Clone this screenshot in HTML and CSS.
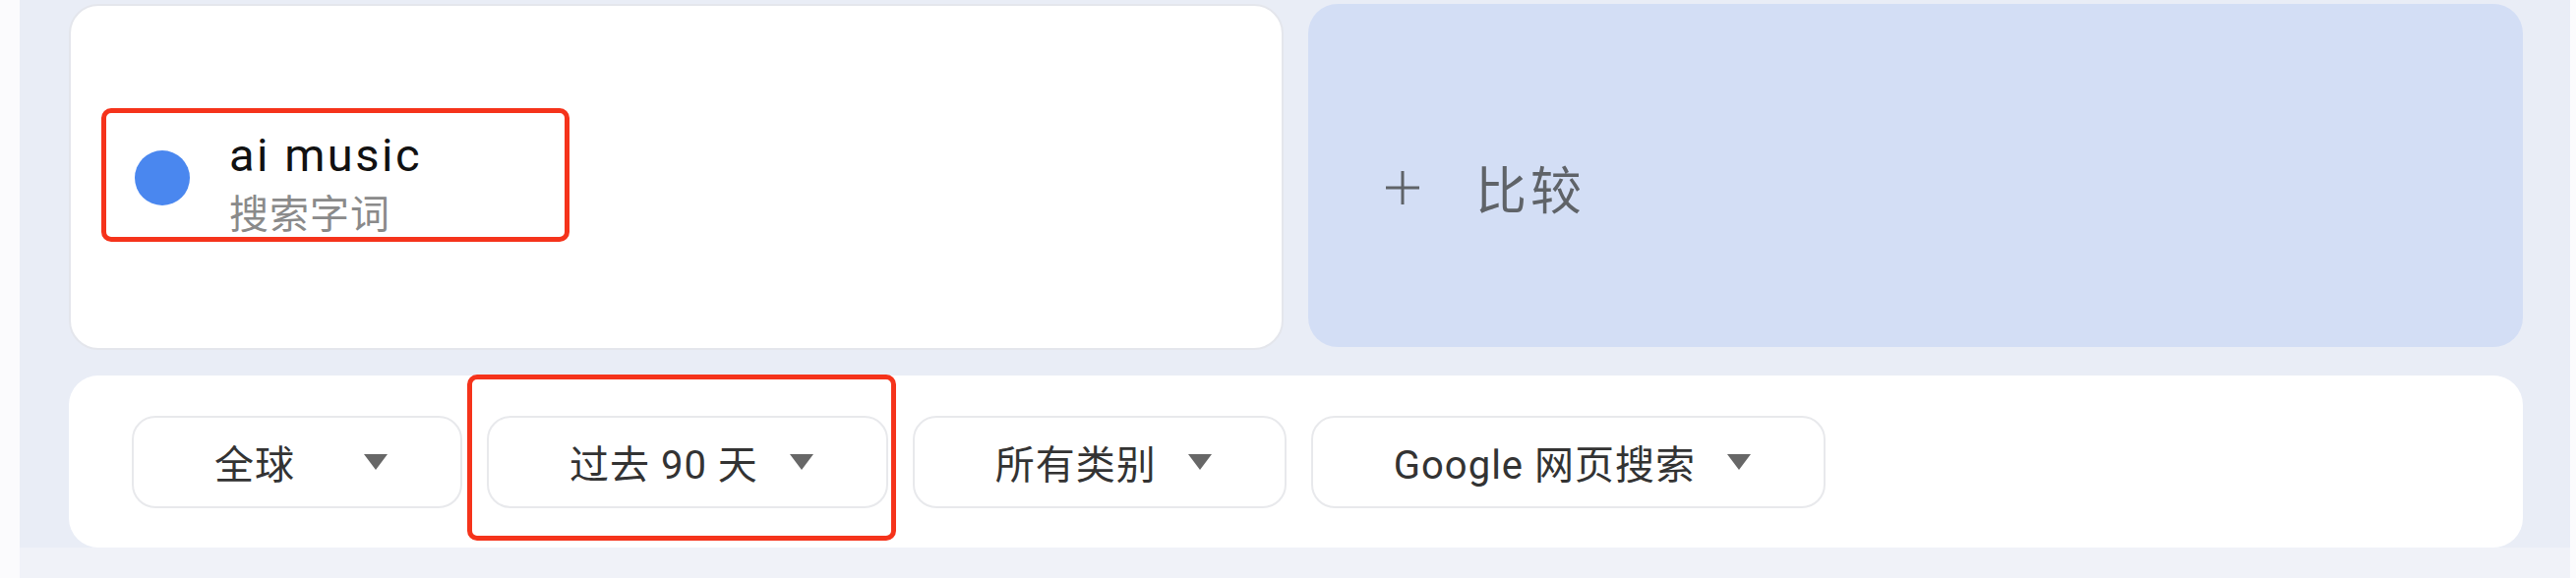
FILE: index.html
```html
<!DOCTYPE html>
<html lang="zh-CN">
<head>
<meta charset="utf-8">
<title>Google Trends</title>
<link rel="stylesheet" href="styles.css">
</head>
<body>
<div class="page">
  <div class="panel">
    <div class="row">
      <div class="card term-card">
        <div class="term">
          <span class="dot"></span>
          <div class="term-text">
            <div class="term-name">ai music</div>
            <div class="term-type">搜索字词</div>
          </div>
          <span class="mark mark-term"></span>
        </div>
      </div>
      <div class="card compare-card">
        <svg class="plus" width="40" height="40" viewBox="0 0 40 40" aria-hidden="true">
          <path d="M20 3 V37 M3 20 H37" stroke="#5f6368" stroke-width="3" fill="none"/>
        </svg>
        <span class="compare-label">比较</span>
      </div>
    </div>
    <div class="filters">
      <div class="chip chip-short"><span class="chip-label">全球</span><span class="caret"></span></div>
      <div class="chip chip-marked"><span class="chip-label">过去 90 天</span><span class="caret"></span><span class="mark mark-chip"></span></div>
      <div class="chip"><span class="chip-label">所有类别</span><span class="caret"></span></div>
      <div class="chip chip-wide"><span class="chip-label">Google 网页搜索</span><span class="caret"></span></div>
    </div>
  </div>
  <div class="footer-band"></div>
</div>
</body>
</html>
```

FILE: styles.css
```css
html, body {
  margin: 0;
  padding: 0;
}

body {
  background: #fbfbfd;
  font-family: Roboto, "Noto Sans CJK SC", sans-serif;
  width: 2619px;
  height: 588px;
  overflow: hidden;
}

.page {
  margin-left: 20px;
  margin-right: 6px;
  height: 588px;
  display: flex;
  flex-direction: column;
}

.panel {
  background: #e9edf6;
  padding: 4px 48px 0 50px;
  height: 557px;
  box-sizing: border-box;
}

.footer-band {
  flex: 1;
  background: #f0f2f8;
}

.row {
  display: grid;
  grid-template-columns: 1fr 1fr;
  gap: 25px;
  align-items: start;
}

.card {
  border-radius: 30px;
  box-sizing: border-box;
}

.term-card {
  background: #ffffff;
  border: 2px solid #e4e6ec;
  height: 352px;
  display: flex;
  align-items: center;
  padding: 18px 0 0 65px;
}

.term {
  position: relative;
  display: flex;
  align-items: flex-start;
  gap: 40px;
}

.dot {
  width: 56px;
  height: 56px;
  border-radius: 50%;
  background: #4a87ef;
  margin-top: 21px;
  flex: none;
}

.term-name {
  font-family: Roboto, sans-serif;
  font-size: 47px;
  line-height: 52px;
  letter-spacing: 2.5px;
  color: #111111;
}

.term-type {
  font-family: "Noto Sans CJK SC", sans-serif;
  font-size: 40px;
  line-height: 62px;
  letter-spacing: 1px;
  color: #8a8a8a;
}

.compare-card {
  background: #d3def5;
  height: 349px;
  display: flex;
  align-items: center;
  gap: 54px;
  padding: 24px 0 0 76px;
}

.plus {
  flex: none;
}

.compare-label {
  font-family: "Noto Sans CJK SC", sans-serif;
  font-size: 52px;
  letter-spacing: 4px;
  color: #5f6368;
}

.filters {
  margin-top: 26px;
  height: 175px;
  background: #ffffff;
  border-radius: 30px;
  display: flex;
  align-items: center;
  gap: 25px;
  padding-left: 64px;
}

.chip {
  position: relative;
  height: 94px;
  box-sizing: border-box;
  border: 2px solid #e8e9ec;
  border-radius: 24px;
  display: flex;
  align-items: center;
  gap: 32px;
  padding: 0 74px 0 82px;
  background: #ffffff;
}

.chip-label {
  font-size: 40px;
  letter-spacing: 1px;
  color: #333333;
  white-space: nowrap;
}

.chip-short .chip-label {
  min-width: 120px;
}

.caret {
  width: 0;
  height: 0;
  border-left: 12px solid transparent;
  border-right: 12px solid transparent;
  border-top: 16px solid #676767;
  flex: none;
}

.mark {
  position: absolute;
  border: 5px solid #f5331b;
  border-radius: 10px;
  pointer-events: none;
}

.mark-term {
  left: -34px;
  right: -150px;
  top: -22px;
  bottom: 0;
}

.mark-chip {
  left: -22px;
  right: -10px;
  top: -44px;
  bottom: -35px;
}
```
